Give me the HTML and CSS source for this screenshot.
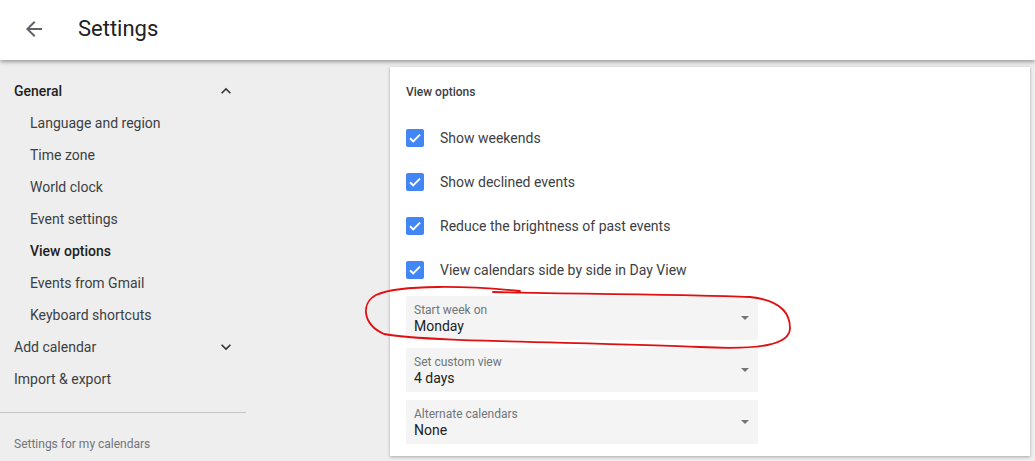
FILE: index.html
```html
<!DOCTYPE html>
<html>
<head>
<meta charset="utf-8">
<link rel="stylesheet" href="styles.css">
</head>
<body>
<header class="topbar">
  <svg class="back" width="24" height="24" viewBox="0 0 24 24"><path d="M20 11H7.83l5.59-5.59L12 4l-8 8 8 8 1.41-1.41L7.83 13H20v-2z" fill="#5f6368"/></svg>
  <h1 class="title">Settings</h1>
</header>
<div class="main">
  <nav class="sidebar">
    <div class="nav-item top bold">General
      <svg class="chev" width="20" height="20" viewBox="0 0 24 24"><path d="M12 8l-6 6 1.41 1.41L12 10.83l4.59 4.58L18 14z" fill="#333"/></svg>
    </div>
    <div class="nav-item sub">Language and region</div>
    <div class="nav-item sub">Time zone</div>
    <div class="nav-item sub">World clock</div>
    <div class="nav-item sub">Event settings</div>
    <div class="nav-item sub bold">View options</div>
    <div class="nav-item sub">Events from Gmail</div>
    <div class="nav-item sub">Keyboard shortcuts</div>
    <div class="nav-item top">Add calendar
      <svg class="chev" width="20" height="20" viewBox="0 0 24 24"><path d="M16.59 8.59L12 13.17 7.41 8.59 6 10l6 6 6-6z" fill="#333"/></svg>
    </div>
    <div class="nav-item top">Import &amp; export</div>
    <hr class="divider">
    <div class="nav-section">Settings for my calendars</div>
  </nav>
  <section class="content">
    <div class="card">
      <div class="card-title">View options</div>
      <div class="check-row"><span class="checkbox"><svg width="18" height="18" viewBox="0 0 18 18"><path d="M4 9.2l3.2 3.2L14 5.6" stroke="#fff" stroke-width="2" fill="none"/></svg></span>Show weekends</div>
      <div class="check-row"><span class="checkbox"><svg width="18" height="18" viewBox="0 0 18 18"><path d="M4 9.2l3.2 3.2L14 5.6" stroke="#fff" stroke-width="2" fill="none"/></svg></span>Show declined events</div>
      <div class="check-row"><span class="checkbox"><svg width="18" height="18" viewBox="0 0 18 18"><path d="M4 9.2l3.2 3.2L14 5.6" stroke="#fff" stroke-width="2" fill="none"/></svg></span>Reduce the brightness of past events</div>
      <div class="check-row"><span class="checkbox"><svg width="18" height="18" viewBox="0 0 18 18"><path d="M4 9.2l3.2 3.2L14 5.6" stroke="#fff" stroke-width="2" fill="none"/></svg></span>View calendars side by side in Day View</div>
      <div class="selects">
        <div class="select"><div class="sel-text"><div class="sel-label">Start week on</div><div class="sel-value">Monday</div></div><span class="caret"></span></div>
        <div class="select"><div class="sel-text"><div class="sel-label">Set custom view</div><div class="sel-value">4 days</div></div><span class="caret"></span></div>
        <div class="select"><div class="sel-text"><div class="sel-label">Alternate calendars</div><div class="sel-value">None</div></div><span class="caret"></span></div>
      </div>
    </div>
  </section>
</div>
<svg class="annotation" width="1035" height="461" viewBox="0 0 1035 461">
  <path d="M520 291 C470 286 400 284 376 295 C361 303 362 324 384 334 C420 342 600 342 700 347 C760 350 790 345 790 328 C790 311 778 300 750 297 C680 294 560 294 493 292" stroke="#e01010" stroke-width="1.8" fill="none" stroke-linecap="round"/>
</svg>
</body>
</html>
```
FILE: styles.css
```css
* { box-sizing: border-box; }
html, body { margin: 0; padding: 0; }
body {
  background: #eeeeee;
  font-family: Roboto, "Noto Sans", Arial, sans-serif;
  color: #212121;
  width: 1035px;
  height: 461px;
  overflow: hidden;
  position: relative;
}
.topbar {
  height: 60px;
  background: #fff;
  display: flex;
  align-items: center;
  box-shadow: 0 2px 4px rgba(0,0,0,0.35);
  position: relative;
  z-index: 2;
}
.back { margin-left: 22px; margin-top: -3px; }
.title {
  margin: 0 0 0 32px;
  font-size: 22px;
  font-weight: 400;
  color: #202124;
  margin-top: -4px;
}
.main {
  display: flex;
  align-items: flex-start;
}
.sidebar {
  width: 246px;
  padding-top: 15px;
  flex: none;
}
.nav-item {
  height: 32px;
  display: flex;
  align-items: center;
  font-size: 14px;
  color: #3c4043;
  position: relative;
}
.nav-item.top { padding-left: 14px; }
.nav-item.sub { padding-left: 30px; }
.nav-item.bold { font-weight: 500; color: #212121; }
.chev {
  position: absolute;
  left: 216px;
  top: 6px;
}
.divider {
  border: 0;
  border-top: 1px solid #c4c4c4;
  margin: 17px 0 0 0;
  height: 0;
}
.nav-section {
  font-size: 12px;
  color: #70757a;
  padding-left: 14px;
  margin-top: 24px;
}
.content {
  margin-left: 144px;
  margin-top: 7px;
}
.card {
  width: 640px;
  height: 389px;
  background: #fff;
  box-shadow: 0 1px 3px rgba(0,0,0,0.3);
  padding: 17px 16px 12px 16px;
}
.card-title {
  font-size: 12px;
  line-height: 16px;
  font-weight: 500;
  color: #3c4043;
  margin-bottom: 16px;
}
.check-row {
  height: 44px;
  display: flex;
  align-items: center;
  font-size: 14px;
  color: #3c4043;
}
.checkbox {
  width: 18px;
  height: 18px;
  border-radius: 2px;
  background: #4285f4;
  margin-right: 16px;
  display: flex;
  flex: none;
}
.selects {
  margin-top: 4px;
  display: flex;
  flex-direction: column;
  gap: 8px;
}
.select {
  width: 352px;
  height: 44px;
  background: #f4f4f4;
  display: flex;
  align-items: center;
  padding: 0 9px 0 8px;
}
.sel-text { flex: 1; margin-top: -1px; }
.sel-label {
  font-size: 12px;
  line-height: 16px;
  color: #70757a;
}
.sel-value {
  font-size: 14px;
  line-height: 16px;
  color: #212121;
}
.caret {
  width: 0;
  height: 0;
  border-left: 4px solid transparent;
  border-right: 4px solid transparent;
  border-top: 4px solid #757575;
  margin-top: -1px;
}
.annotation {
  position: absolute;
  left: 0;
  top: 0;
  pointer-events: none;
  z-index: 5;
}
```
